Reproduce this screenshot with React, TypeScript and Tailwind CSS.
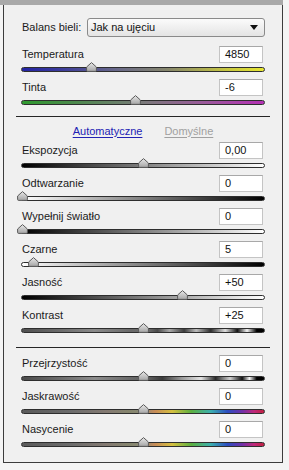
import React from "react";

type Row = { label: string; value: string; cx: number; bg: string };

const BW = "linear-gradient(to right, #000000, #ffffff)";
const WB = "linear-gradient(to right, #ffffff, #000000)";
const KONTRAST =
  "linear-gradient(to right, #505050 0%, #6a6a6a 15%, #8a8a8a 30%, #6a6a6a 45%, #6e6e6e 52%, #4a4a4a 56%, #a8a8a8 61%, #3c3c3c 67%, #bcbcbc 72%, #2e2e2e 78%, #dedede 84%, #141414 89%, #f2f2f2 93%, #000000 97%, #000000 100%)";
const PRZEJ =
  "linear-gradient(to right, #4a4a4a 0%, #6a6a6a 15%, #8c8c8c 30%, #6a6a6a 45%, #606060 52%, #3a3a3a 58%, #9a9a9a 66%, #e4e4e4 74%, #2a2a2a 80%, #cfcfcf 86%, #101010 91%, #f4f4f4 94%, #000000 97%, #000000 100%)";
const RAINBOW =
  "linear-gradient(to right, #5a5a5a 0%, #6c6c6c 20%, #847a72 35%, #86866e 45%, #8c8a78 50%, #c88c58 55%, #d6c040 62%, #5cb040 70%, #3cb0b0 78%, #2c4cc0 85%, #7030a8 91%, #c02878 96%, #c02040 100%)";

const section1: Row[] = [
  {
    label: "Temperatura",
    value: "4850",
    cx: 91,
    bg: "linear-gradient(to right, #2424a4 0%, #3a3a9c 15%, #6a6a88 40%, #86866c 60%, #c8c840 85%, #e6e632 100%)",
  },
  {
    label: "Tinta",
    value: "-6",
    cx: 135,
    bg: "linear-gradient(to right, #2f9a2f 0%, #4a8a4a 20%, #7a7a7a 50%, #9a5a9a 75%, #b430b4 100%)",
  },
];

const section2: Row[] = [
  { label: "Ekspozycja", value: "0,00", cx: 143, bg: BW },
  { label: "Odtwarzanie", value: "0", cx: 22, bg: WB },
  { label: "Wypełnij światło", value: "0", cx: 22, bg: BW },
  { label: "Czarne", value: "5", cx: 33, bg: WB },
  { label: "Jasność", value: "+50", cx: 182, bg: BW },
  { label: "Kontrast", value: "+25", cx: 143, bg: KONTRAST },
];

const section3: Row[] = [
  { label: "Przejrzystość", value: "0", cx: 143, bg: PRZEJ },
  { label: "Jaskrawość", value: "0", cx: 143, bg: RAINBOW },
  { label: "Nasycenie", value: "0", cx: 143, bg: RAINBOW },
];

function Thumb() {
  return (
    <svg width="11" height="10" viewBox="0 0 11 10" className="block">
      <defs>
        <linearGradient id="tg" x1="0" y1="0" x2="0" y2="1">
          <stop offset="0" stopColor="#e8e8e8" />
          <stop offset="1" stopColor="#a4a4a4" />
        </linearGradient>
      </defs>
      <path
        d="M5.5 0.6 L10.4 5 L10.4 8.4 Q10.4 9.4 9.4 9.4 L1.6 9.4 Q0.6 9.4 0.6 8.4 L0.6 5 Z"
        fill="url(#tg)"
        stroke="#5a5a5a"
        strokeWidth="1"
        strokeLinejoin="round"
      />
    </svg>
  );
}

function SliderRow({ row }: { row: Row }) {
  return (
    <div className="flex flex-col h-[33px]">
      <div className="flex items-center justify-between h-[17px]">
        <span className="pl-[1px] text-[#1a1a1a] leading-none whitespace-nowrap">{row.label}</span>
        <div className="mr-[2px] w-[44px] h-[17px] bg-white border border-[#c4c4c4] border-t-[#a8a8a8] flex items-center pl-[5px] text-[#111] leading-none">
          {row.value}
        </div>
      </div>
      <div className="relative mt-[1px] h-[10px]">
        <div
          className="absolute left-0 right-0 top-[3px] h-[5px] rounded-full border border-[#2e2e2e]"
          style={{ background: row.bg }}
        />
        <div className="absolute top-[-2px]" style={{ left: row.cx - 21 - 5 }}>
          <Thumb />
        </div>
      </div>
    </div>
  );
}

export default function App() {
  return (
    <div
      className="w-[289px] h-[470px] bg-[#f4f4f4] text-[11px] overflow-hidden"
      style={{ fontFamily: '"Liberation Sans", Arial, sans-serif' }}
    >
      <div className="w-[283px] h-[5px] bg-[#a9a9a9]" />
      <div className="ml-[3px] w-[280px] border-l border-r border-b border-[#3c3c3c] bg-[#f0f0f0] px-[17px] pt-[13px] pb-[8px] flex flex-col">
        <div className="flex items-center h-[19px]">
          <span className="pl-[1px] text-[#1a1a1a] leading-none whitespace-nowrap">Balans bieli:</span>
          <div className="ml-auto w-[178px] h-[19px] rounded-[3px] border border-[#8a8a8a] bg-gradient-to-b from-[#fbfbfb] to-[#e4e4e4] flex items-center pl-[3px] pr-[6px] text-[#111] leading-none">
            <span>Jak na ujęciu</span>
            <svg width="8" height="5" viewBox="0 0 8 5" className="ml-auto">
              <path d="M0 0 L8 0 L4 5 Z" fill="#111" />
            </svg>
          </div>
        </div>
        <div className="mt-[9px] flex flex-col">
          {section1.map((r) => (
            <SliderRow key={r.label} row={r} />
          ))}
        </div>
        <div className="mt-[4px] -mx-[5px] h-[1px] bg-[#262626]" />
        <div className="mt-[7px] h-[14px] flex items-center justify-center gap-[22px] leading-none">
          <span className="text-[#2222b4] underline underline-offset-2">Automatyczne</span>
          <span className="text-[#a0a0a0] underline underline-offset-2">Domyślne</span>
        </div>
        <div className="mt-[4px] flex flex-col">
          {section2.map((r) => (
            <SliderRow key={r.label} row={r} />
          ))}
        </div>
        <div className="mt-[7px] -mx-[5px] h-[1px] bg-[#262626]" />
        <div className="mt-[7px] flex flex-col">
          {section3.map((r) => (
            <SliderRow key={r.label} row={r} />
          ))}
        </div>
      </div>
    </div>
  );
}
